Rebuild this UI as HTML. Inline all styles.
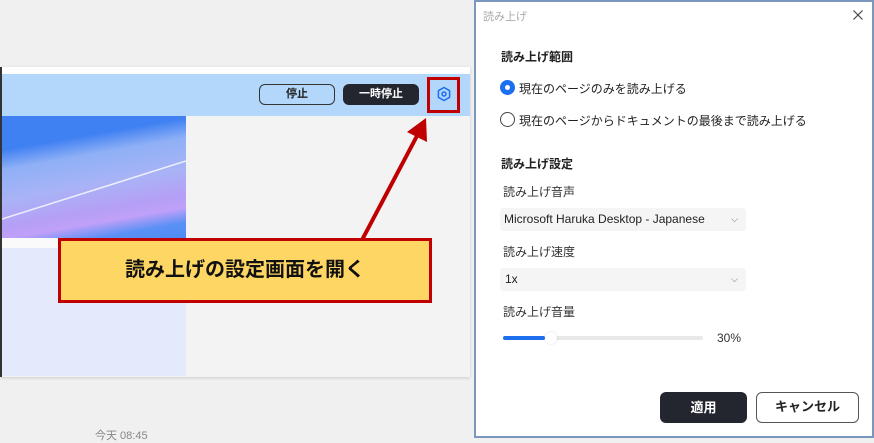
<!DOCTYPE html>
<html><head><meta charset="utf-8"><style>
*{margin:0;padding:0;box-sizing:border-box}
body{width:874px;height:438px;overflow:hidden;background:#f0f0f0;position:relative;font-family:"Liberation Sans","Noto Sans CJK JP",sans-serif}
.a{position:absolute}
</style></head><body>
<div class="a" style="left:0;top:67px;width:470px;height:310px;background:#f3f3f3;border-left:2px solid #333;box-shadow:0 1px 3px rgba(0,0,0,.15)"></div>
<div class="a" style="left:2px;top:67px;width:468px;height:7px;background:#fff"></div>
<div class="a" style="left:2px;top:74px;width:468px;height:42px;background:#b3d6fb"></div>
<div class="a" style="left:2px;top:116px;width:184px;height:122px;background:linear-gradient(170deg,#3f80f2 0%,#3f80f2 22%,#8fb0f6 35%,#a9b3f6 55%,#b59ff6 72%,#c0a0f8 80%,#5a90f5 90%,#4e8cf3 100%)"></div>
<svg class="a" style="left:2px;top:116px" width="184" height="122"><line x1="0" y1="103" x2="184" y2="45" stroke="#fff" stroke-width="1.5" opacity=".8"/></svg>
<div class="a" style="left:2px;top:238px;width:184px;height:10px;background:#fafafa"></div>
<div class="a" style="left:2px;top:248px;width:184px;height:128px;background:#e4e9fb"></div>
<div class="a" style="left:259px;top:84px;width:76px;height:21px;border:1.5px solid #333;border-radius:6px;font-size:11px;font-weight:bold;text-align:center;line-height:18px;color:#222">停止</div>
<div class="a" style="left:343px;top:84px;width:76px;height:21px;background:#23262f;border-radius:6px;font-size:11px;font-weight:bold;text-align:center;line-height:21px;color:#fff">一時停止</div>
<div class="a" style="left:427px;top:77px;width:33px;height:36px;border:3px solid #c00000"></div>
<svg class="a" style="left:436px;top:86px" width="16" height="16" viewBox="0 0 16 16"><path d="M8 1.5 L13.6 4.7 L13.6 11.3 L8 14.5 L2.4 11.3 L2.4 4.7 Z" fill="none" stroke="#1e6ef0" stroke-width="1.5" stroke-linejoin="round"/><circle cx="8" cy="8" r="2" fill="none" stroke="#1e6ef0" stroke-width="1.5"/></svg>
<svg class="a" style="left:0;top:0" width="470" height="438"><line x1="362" y1="240" x2="418" y2="134" stroke="#c00000" stroke-width="4"/><polygon points="426,118 427,142 407,132" fill="#c00000"/></svg>
<div class="a" style="left:58px;top:238px;width:374px;height:65px;background:#fdd663;border:3px solid #c00000;font-size:20px;font-weight:bold;text-align:center;line-height:59px;color:#111">読み上げの設定画面を開く</div>
<div class="a" style="left:95px;top:427px;font-size:11px;color:#888">今天 08:45</div>

<div class="a" style="left:474px;top:0;width:400px;height:438px;background:#fff;border:2px solid #7b97bd"></div>
<div class="a" style="left:483px;top:8px;font-size:11px;color:#aaa">読み上げ</div>
<svg class="a" style="left:853px;top:10px" width="10" height="10"><path d="M0.5 0.5 L9.5 9.5 M9.5 0.5 L0.5 9.5" stroke="#444" stroke-width="1.2"/></svg>
<div class="a" style="left:501px;top:48px;font-size:12px;font-weight:bold;color:#222">読み上げ範囲</div>
<div class="a" style="left:500px;top:80px;width:15px;height:15px;border-radius:50%;background:#1e6ef0"><div class="a" style="left:5px;top:5px;width:5px;height:5px;border-radius:50%;background:#fff"></div></div>
<div class="a" style="left:519px;top:80px;font-size:12px;color:#222">現在のページのみを読み上げる</div>
<div class="a" style="left:500px;top:112px;width:15px;height:15px;border-radius:50%;border:1.3px solid #444"></div>
<div class="a" style="left:519px;top:112px;font-size:12px;color:#222">現在のページからドキュメントの最後まで読み上げる</div>
<div class="a" style="left:501px;top:155px;font-size:12px;font-weight:bold;color:#222">読み上げ設定</div>
<div class="a" style="left:503px;top:183px;font-size:12px;color:#333">読み上げ音声</div>
<div class="a" style="left:500px;top:208px;width:246px;height:23px;background:#f5f5f5;border-radius:3px;font-size:12px;color:#222;padding-left:4px;line-height:23px">Microsoft Haruka Desktop - Japanese<span class="a" style="right:8px;top:0;font-size:9px;color:#666">⌵</span></div>
<div class="a" style="left:503px;top:243px;font-size:12px;color:#333">読み上げ速度</div>
<div class="a" style="left:500px;top:268px;width:246px;height:23px;background:#f5f5f5;border-radius:3px;font-size:12px;color:#222;padding-left:5px;line-height:23px">1x<span class="a" style="right:8px;top:0;font-size:9px;color:#666">⌵</span></div>
<div class="a" style="left:503px;top:303px;font-size:12px;color:#333">読み上げ音量</div>
<div class="a" style="left:503px;top:336px;width:200px;height:4px;background:#e8e8e8;border-radius:2px"></div>
<div class="a" style="left:503px;top:336px;width:42px;height:4px;background:#1e6ef0;border-radius:2px"></div>
<div class="a" style="left:545px;top:332px;width:12px;height:12px;background:#fff;border-radius:50%;box-shadow:0 0 2px rgba(0,0,0,.15)"></div>
<div class="a" style="left:717px;top:331px;font-size:12px;color:#333">30%</div>
<div class="a" style="left:660px;top:392px;width:87px;height:31px;background:#23262f;border-radius:6px;color:#fff;font-size:13px;font-weight:bold;text-align:center;line-height:31px">適用</div>
<div class="a" style="left:756px;top:392px;width:103px;height:31px;border:1.5px solid #555;border-radius:6px;color:#222;font-size:13px;font-weight:bold;text-align:center;line-height:28px">キャンセル</div>
</body></html>
